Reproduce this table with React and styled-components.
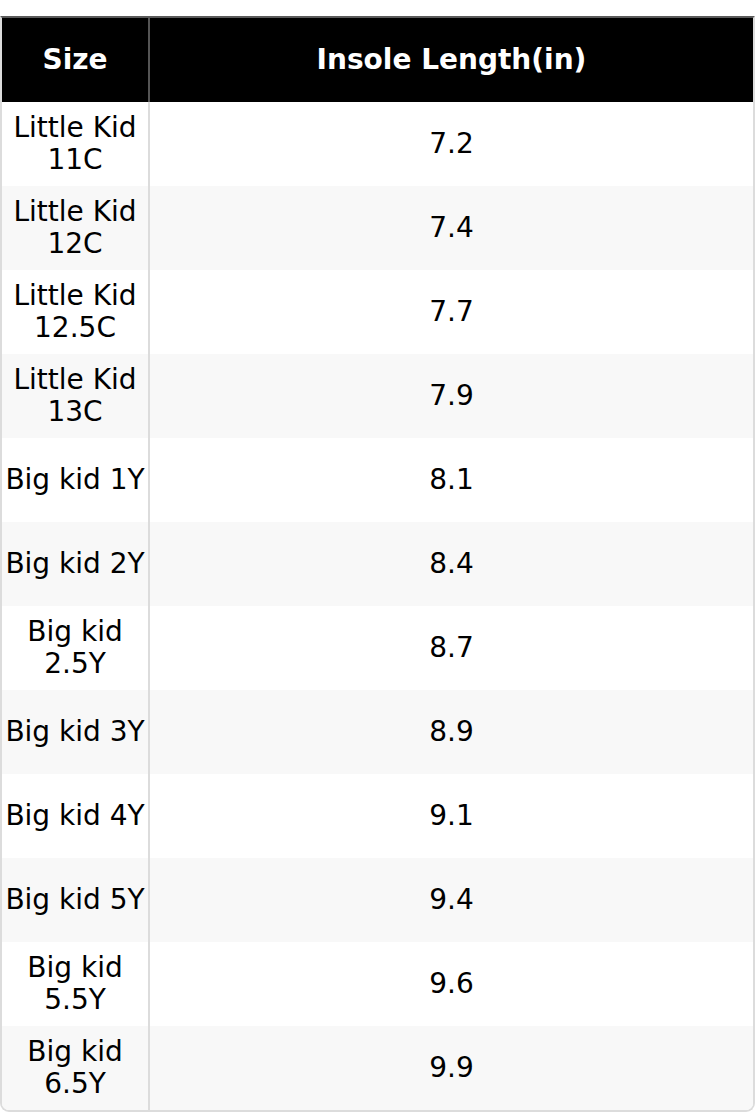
import React from 'react';
import styled, { createGlobalStyle } from 'styled-components';

const GlobalStyle = createGlobalStyle`
  body {
    margin: 0;
    background: #fff;
    font-family: "DejaVu Sans", Verdana, sans-serif;
  }
`;

const sizes = [
  ['Little Kid 11C', '7.2'],
  ['Little Kid 12C', '7.4'],
  ['Little Kid 12.5C', '7.7'],
  ['Little Kid 13C', '7.9'],
  ['Big kid 1Y', '8.1'],
  ['Big kid 2Y', '8.4'],
  ['Big kid 2.5Y', '8.7'],
  ['Big kid 3Y', '8.9'],
  ['Big kid 4Y', '9.1'],
  ['Big kid 5Y', '9.4'],
  ['Big kid 5.5Y', '9.6'],
  ['Big kid 6.5Y', '9.9'],
];

const Table = styled.div`
  margin-top: 16px;
  width: 755px;
  box-sizing: border-box;
  border: 2px solid #dcdcdc;
  border-top-color: #5a5a5a;
  border-radius: 0 0 9px 9px;
  overflow: hidden;
`;

const Row = styled.div`
  display: grid;
  grid-template-columns: 146px 1fr;
  height: 84px;
  background: ${p => (p.$head ? '#000' : p.$striped ? '#f8f8f8' : '#fff')};
`;

const Cell = styled.div`
  display: flex;
  align-items: center;
  justify-content: center;
  text-align: center;
  font-size: 28px;
  line-height: 32px;
  color: ${p => (p.$head ? '#fff' : '#000')};
  font-weight: ${p => (p.$head ? 700 : 400)};
  border-left: ${p => (p.$first ? 'none' : `2px solid ${p.$head ? '#555' : '#dcdcdc'}`)};
  padding: 0 3px;
`;

const HeadRow = styled(Row)`
  margin-left: -2px;
  border-left: 2px solid #5a5a5a;
`;

export default function App() {
  return (
    <>
      <GlobalStyle />
      <Table>
        <HeadRow $head>
          <Cell $head $first>Size</Cell>
          <Cell $head>Insole Length(in)</Cell>
        </HeadRow>
        {sizes.map(([size, len], i) => (
          <Row key={size} $striped={i % 2 === 1}>
            <Cell $first>{size}</Cell>
            <Cell>{len}</Cell>
          </Row>
        ))}
      </Table>
    </>
  );
}
